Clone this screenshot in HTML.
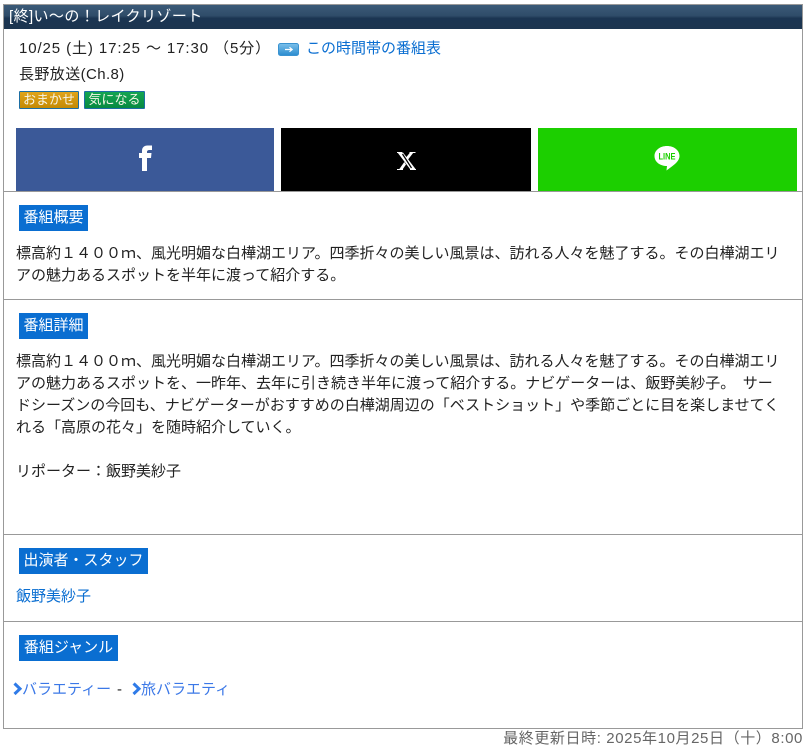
<!DOCTYPE html>
<html lang="ja">
<head>
<meta charset="utf-8">
<title>[終]い~の!レイクリゾート</title>
<style>
html,body{margin:0;padding:0;background:#fff;}
body{width:805px;height:747px;position:relative;overflow:hidden;font-family:"Liberation Sans","Noto Sans CJK JP",sans-serif;color:#222;font-size:15px;}
.a{position:absolute;white-space:nowrap;line-height:22px;}
.box{position:absolute;left:3px;top:4px;width:798px;height:723px;border:1px solid #999;}
.hr{position:absolute;left:3px;width:799px;height:1px;background:#999;}
.hd{position:absolute;left:4px;top:5px;width:798px;height:24px;background:linear-gradient(#3b5a78 0,#2f4c69 45%,#1b3552 55%,#1c3550 100%);}
.tt{position:absolute;left:19px;height:26px;line-height:26px;background:#0a6ed1;color:#fff;font-size:15px;text-align:center;}
.sn{position:absolute;top:128px;height:63px;}
.tag{position:absolute;top:91px;height:16px;line-height:16px;border:1px solid #1c6ea4;font-size:13px;color:#f6f6e8;text-align:center;border-radius:1px;}
a,.l{color:#0a6ed1;text-decoration:none;}
.g{color:#3b78e7;}
.n{letter-spacing:.4px;}
</style>
</head>
<body>
<div class="box"></div>
<div class="hd"></div>
<div class="a" style="left:9px;top:6px;line-height:22px;color:#fff;font-size:15px;letter-spacing:.4px;">[終]い～の！レイクリゾート</div>

<div class="a" style="left:19px;top:38px;letter-spacing:.9px;">10/25 (土) 17:25 ～ 17:30 （5分）</div>
<svg style="position:absolute;left:278px;top:43px" width="22" height="13" viewBox="0 0 22 13"><defs><linearGradient id="bg" x1="0" y1="0" x2="0" y2="1"><stop offset="0" stop-color="#7cc0ea"/><stop offset="1" stop-color="#2a8ccf"/></linearGradient></defs><rect x="0.5" y="0.5" width="20" height="12" rx="2" fill="url(#bg)" stroke="#3a93d1"/><path d="M7 6.500h7M11.500 4.300l2.700 2.200-2.700 2.200" fill="none" stroke="#fff" stroke-width="1.200"/></svg>
<div class="a l" style="left:306px;top:38px;">この時間帯の番組表</div>
<div class="a n" style="left:19px;top:64px;">長野放送(Ch.8)</div>
<div class="tag" style="left:19px;width:58px;background:linear-gradient(#e0a41a,#c48a04);">おまかせ</div>
<div class="tag" style="left:84px;width:59px;background:linear-gradient(#13a552,#078a41);">気になる</div>

<div class="sn" style="left:16px;width:258px;background:#3b5998;"></div>
<div class="sn" style="left:281px;width:250px;background:#000;"></div>
<div class="sn" style="left:538px;width:259px;background:#1ccf00;"></div>
<svg style="position:absolute;left:138px;top:145px" width="15" height="27" viewBox="0 0 15 27"><path d="M4 26V13H1V8h3V6C4 2.500 6 .5 9.500 .5H14V5h-2.500C10 5 9 5.500 9 7v1h4.500l-.5 5H9v13z" fill="#fff"/></svg>
<svg style="position:absolute;left:397px;top:152px" width="19" height="18" viewBox="0 0 19 18"><path d="M0.500 0.500H6L18.500 17H13z" fill="#fff"/><path d="M5.500 2L14.500 16" stroke="#000" stroke-width="1.200"/><path d="M16.500 0.500h-3.500L9 5.500l1.700 2.500zM2 17.500h3.500L9 12.500l-1.700-2.500z" fill="#fff"/><path d="M0 .5h5M12.500 .5h6M0 17.500h6M13 17.500h6" stroke="#fff"/></svg>
<svg style="position:absolute;left:654px;top:146px" width="26" height="25" viewBox="0 0 26 25"><path d="M13 0C20 0 25.500 4.300 25.500 10c0 5-5 8.500-9 11.500l-4 3 .5-4.500C6 20 .5 16 .5 10 .5 4.300 6 0 13 0z" fill="#fff"/><text x="13" y="13.500" text-anchor="middle" font-family="Liberation Sans" font-weight="bold" font-size="9" fill="#1ccf00" textLength="17" lengthAdjust="spacingAndGlyphs">LINE</text></svg>

<div class="hr" style="top:191px;"></div>
<div class="tt" style="top:205px;width:69px;">番組概要</div>
<div class="a" style="left:16px;top:243px;">標高約１４００ｍ、風光明媚な白樺湖エリア。四季折々の美しい風景は、訪れる人々を魅了する。その白樺湖エリ</div>
<div class="a" style="left:16px;top:265px;">アの魅力あるスポットを半年に渡って紹介する。</div>

<div class="hr" style="top:299px;"></div>
<div class="tt" style="top:313px;width:69px;">番組詳細</div>
<div class="a" style="left:16px;top:351px;">標高約１４００ｍ、風光明媚な白樺湖エリア。四季折々の美しい風景は、訪れる人々を魅了する。その白樺湖エリ</div>
<div class="a" style="left:16px;top:373px;">アの魅力あるスポットを、一昨年、去年に引き続き半年に渡って紹介する。ナビゲーターは、飯野美紗子。　サー</div>
<div class="a" style="left:16px;top:395px;">ドシーズンの今回も、ナビゲーターがおすすめの白樺湖周辺の「ベストショット」や季節ごとに目を楽しませてく</div>
<div class="a" style="left:16px;top:417px;">れる「高原の花々」を随時紹介していく。</div>
<div class="a" style="left:16px;top:461px;">リポーター：飯野美紗子</div>

<div class="hr" style="top:534px;"></div>
<div class="tt" style="top:548px;width:129px;">出演者・スタッフ</div>
<div class="a l" style="left:16px;top:586px;">飯野美紗子</div>

<div class="hr" style="top:621px;"></div>
<div class="tt" style="top:635px;width:99px;">番組ジャンル</div>
<svg style="position:absolute;left:12px;top:682px" width="11" height="14" viewBox="0 0 11 14"><path d="M2.500 1.500L8 6.800 2.500 12" fill="none" stroke="#2f7be8" stroke-width="3"/></svg>
<div class="a g" style="left:22px;top:679px;">バラエティー</div>
<div class="a" style="left:117px;top:679px;">-</div>
<svg style="position:absolute;left:131px;top:682px" width="11" height="14" viewBox="0 0 11 14"><path d="M2.500 1.500L8 6.800 2.500 12" fill="none" stroke="#2f7be8" stroke-width="3"/></svg>
<div class="a g" style="left:141px;top:679px;">旅バラエティ</div>

<div class="a" style="right:2px;top:728px;color:#666;letter-spacing:.6px;">最終更新日時: 2025年10月25日（十）8:00</div>
</body>
</html>
